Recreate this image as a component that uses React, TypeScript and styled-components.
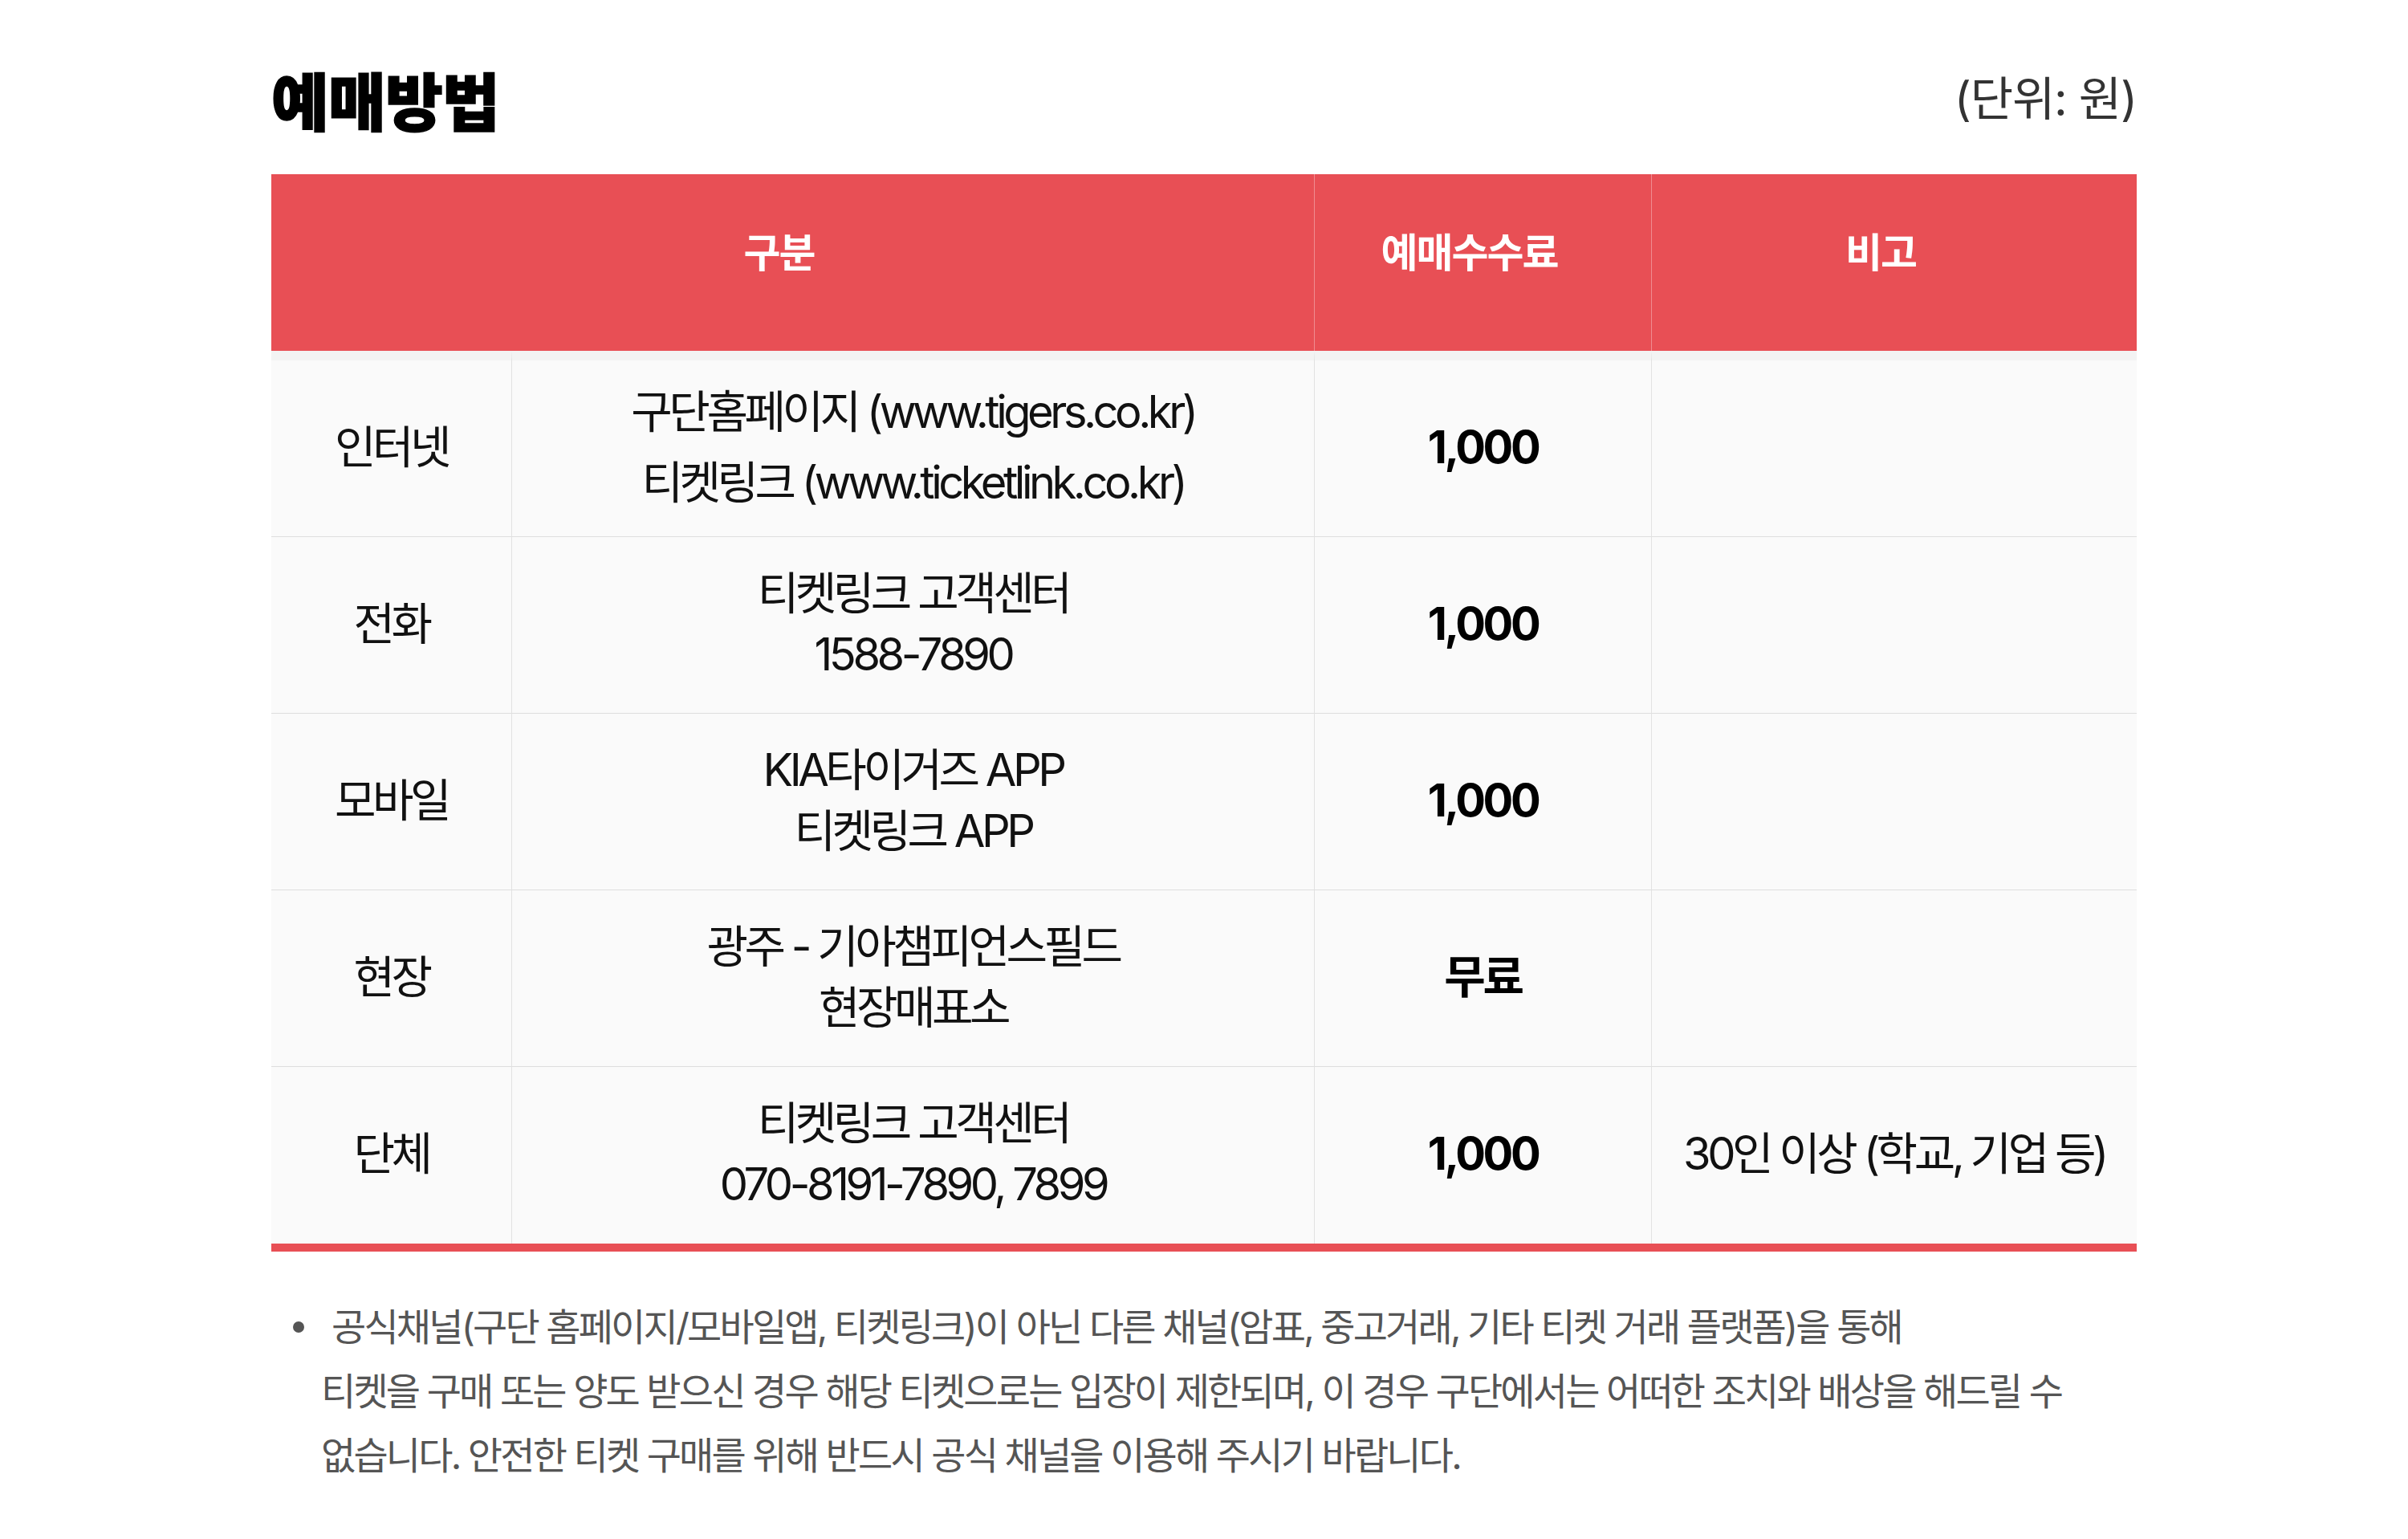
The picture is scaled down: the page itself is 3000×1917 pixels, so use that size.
import React from "react";
import styled, { createGlobalStyle } from "styled-components";

const GlobalStyle = createGlobalStyle`
  * {
    box-sizing: border-box;
  }
  html,
  body {
    margin: 0;
    padding: 0;
    background: #fff;
  }
  body {
    font-family: Inter, "Noto Sans CJK KR", sans-serif;
    color: #111;
  }
`;

const RED = "#e84f55";

const Page = styled.main`
  width: 2324px;
  margin: 0 auto;
  padding: 84px 0 80px;
`;

const TitleRow = styled.div`
  display: flex;
  justify-content: space-between;
  align-items: center;
  margin-bottom: 55px;
`;

const Title = styled.h2`
  margin: 0;
  font-family: "Noto Sans CJK KR", sans-serif;
  font-size: 78px;
  font-weight: 900;
  line-height: 1;
  letter-spacing: -0.01em;
  color: #000;
  -webkit-text-stroke: 1.5px #000;
`;

const Unit = styled.span`
  font-size: 58px;
  line-height: 1;
  letter-spacing: -0.02em;
  color: #333;
`;

const Table = styled.table`
  width: 100%;
  table-layout: fixed;
  border-collapse: separate;
  border-spacing: 0;
  border-bottom: 10px solid ${RED};
`;

const HeadRow = styled.tr`
  height: 220px;
`;

const HeadCell = styled.th`
  padding: 0 34px 32px 0;
  background: ${RED};
  color: #fff;
  font-size: 50px;
  font-weight: 700;
  letter-spacing: -0.04em;
  text-align: center;
  vertical-align: middle;

  & + & {
    border-left: 1px solid rgba(255, 255, 255, 0.35);
  }
`;

const Row = styled.tr<{ $first?: boolean }>`
  height: ${p => (p.$first ? "232px" : "220px")};
`;

const Cell = styled.td<{ $loose?: boolean }>`
  padding: 0 10px 4px;
  background: #fafafa;
  border-bottom: 1px solid #dedede;
  text-align: center;
  vertical-align: middle;
  font-size: 56px;
  font-weight: 400;
  letter-spacing: -0.08em;
  line-height: ${p => (p.$loose ? "88px" : "76px")};
  color: #111;

  & + & {
    border-left: 1px solid #e2e2e2;
  }
  tr:first-child > & {
    border-top: 12px solid #f3f3f3;
  }
  tr:last-child > & {
    border-bottom: none;
  }
`;

const FeeCell = styled(Cell)`
  font-size: 56px;
  font-weight: 700;
  letter-spacing: -0.06em;
  color: #000;
`;

const Notice = styled.p`
  position: relative;
  margin: 54px 0 0;
  padding-left: 62px;
  text-indent: 13px;
  font-size: 47px;
  line-height: 80px;
  letter-spacing: -0.06em;
  color: #555;

  &::before {
    content: "";
    position: absolute;
    left: 27px;
    top: 33px;
    width: 14px;
    height: 14px;
    border-radius: 50%;
    background: #555;
  }
`;

type Method = {
  type: string;
  channel: string[];
  fee: string;
  note?: string;
  loose?: boolean;
};

const methods: Method[] = [
  {
    type: "인터넷",
    channel: ["구단홈페이지 (www.tigers.co.kr)", "티켓링크 (www.ticketlink.co.kr)"],
    fee: "1,000",
    loose: true
  },
  { type: "전화", channel: ["티켓링크 고객센터", "1588-7890"], fee: "1,000" },
  { type: "모바일", channel: ["KIA타이거즈 APP", "티켓링크 APP"], fee: "1,000" },
  { type: "현장", channel: ["광주 - 기아챔피언스필드", "현장매표소"], fee: "무료" },
  {
    type: "단체",
    channel: ["티켓링크 고객센터", "070-8191-7890, 7899"],
    fee: "1,000",
    note: "30인 이상 (학교, 기업 등)"
  }
];

function App() {
  return (
    <>
      <GlobalStyle />
      <Page>
        <TitleRow>
          <Title>예매방법</Title>
          <Unit>(단위: 원)</Unit>
        </TitleRow>

        <Table>
          <colgroup>
            <col style={{ width: 299 }} />
            <col style={{ width: 1000 }} />
            <col style={{ width: 420 }} />
            <col />
          </colgroup>
          <thead>
            <HeadRow>
              <HeadCell colSpan={2}>구분</HeadCell>
              <HeadCell>예매수수료</HeadCell>
              <HeadCell>비고</HeadCell>
            </HeadRow>
          </thead>
          <tbody>
            {methods.map((m, i) => (
              <Row key={m.type} $first={i === 0}>
                <Cell>{m.type}</Cell>
                <Cell $loose={m.loose}>
                  {m.channel[0]}
                  <br />
                  {m.channel[1]}
                </Cell>
                <FeeCell>{m.fee}</FeeCell>
                <Cell>{m.note}</Cell>
              </Row>
            ))}
          </tbody>
        </Table>

        <Notice>
          공식채널(구단 홈페이지/모바일앱, 티켓링크)이 아닌 다른 채널(암표, 중고거래, 기타 티켓 거래 플랫폼)을 통해
          <br />
          티켓을 구매 또는 양도 받으신 경우 해당 티켓으로는 입장이 제한되며, 이 경우 구단에서는 어떠한 조치와 배상을 해드릴 수
          <br />
          없습니다. 안전한 티켓 구매를 위해 반드시 공식 채널을 이용해 주시기 바랍니다.
        </Notice>
      </Page>
    </>
  );
}

export default App;
